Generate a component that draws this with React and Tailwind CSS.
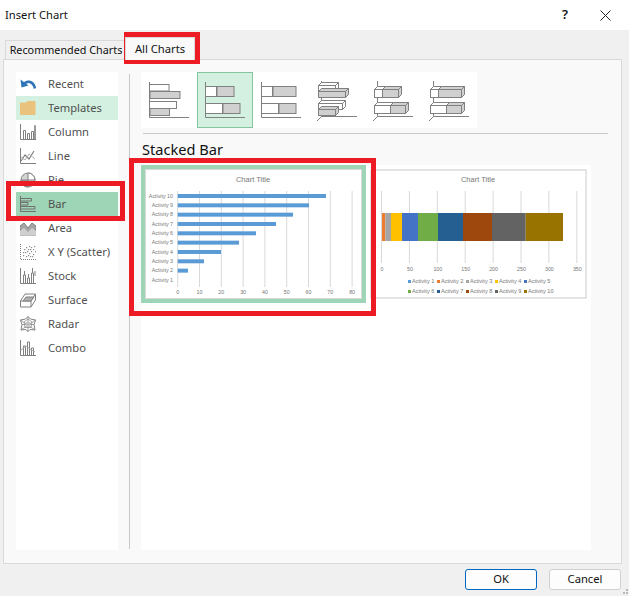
const G = '#808080';

// left list icons, drawn on a 16x16 box
const RecentIcon = () => (
    <svg width="16" height="16" viewBox="0 0 16 16">
        <path d="M3.5 9C6 4.500 13 4 15 12.500" fill="none" stroke="#2e75b6" strokeWidth="2.600" />
        <path d="M0.500 3.500L1.500 11.500L8.500 9.500Z" fill="#2e75b6" />
    </svg>
);
const FolderIcon = () => (
    <svg width="16" height="16" viewBox="0 0 16 16">
        <path d="M0 2.500H6L7.500 1H15.500V15H0Z" fill="#e9c27d" />
    </svg>
);
const ColumnIcon = () => (
    <svg width="16" height="16" viewBox="0 0 16 16" fill="none" stroke={G}>
        <path d="M0.500 0V15.500H16M3.500 15V6.500H5.500V15M7.500 15V9.500H9.500V15M11.500 15V7.500H13.500V15" />
        <path d="M14.500 15V1.500H15.500V15" strokeWidth="0.800" />
    </svg>
);
const LineIcon = () => (
    <svg width="16" height="16" viewBox="0 0 16 16" fill="none" stroke={G}>
        <path d="M0.500 0V15.500H16" />
        <path d="M1 13L5 7L9 11L14 3" strokeWidth="1.200" />
        <path d="M1 9L5 12L9 6L15 11" stroke="#b0b0b0" />
    </svg>
);
const PieIcon = () => (
    <svg width="16" height="16" viewBox="0 0 16 16">
        <circle cx="8" cy="8" r="7" fill="#d4d4d4" stroke={G} />
        <path d="M8 8V1A7 7 0 0 1 15 8Z" fill="#fff" stroke={G} />
        <path d="M8 8V15A7 7 0 0 1 1 8Z" fill="#a0a0a0" stroke={G} />
    </svg>
);
const BarIcon = () => (
    <svg width="16" height="16" viewBox="0 0 16 16" fill="none" stroke="#707070">
        <path d="M0.500 0V15.500H16M1 2.500H11.500V5H1M1 6.500H8V9H1M1 10.500H15V13H1" />
    </svg>
);
const AreaIcon = () => (
    <svg width="16" height="16" viewBox="0 0 16 16">
        <path d="M0 6L4 3L8 8L12 3L16 6V15H0Z" fill="#a6a6a6" stroke={G} />
        <path d="M0 11L4 8L8 12L12 8L16 11V15H0Z" fill="#cfcfcf" />
    </svg>
);
const ScatterIcon = () => (
    <svg width="16" height="16" viewBox="0 0 16 16" fill="#8c8c8c">
        <path d="M0.500 0V15.500H16" fill="none" stroke={G} strokeDasharray="1 1" />
        {[[3, 11], [5, 8], [6, 12], [8, 5], [9, 9], [11, 3], [11, 7], [13, 5], [13, 10], [14, 2], [7, 7], [10, 12], [4, 5], [6, 3], [9, 2], [3, 8], [12, 12], [8, 11], [15, 7], [10, 5]].map(([x, y]) => (
            <rect key={`${x}-${y}`} x={x} y={y} width="1.200" height="1.200" />
        ))}
    </svg>
);
const StockIcon = () => (
    <svg width="16" height="16" viewBox="0 0 16 16" fill="none" stroke={G}>
        <path d="M0.500 0V15.500H16M3.500 15V7H5.500V15M7.500 15V10H9.500V15M11.500 15V5H13.500V15M4.500 7V3M8.500 10V6M12.500 5V0M15 3V8" />
    </svg>
);
const SurfaceIcon = () => (
    <svg width="16" height="16" viewBox="0 0 16 16" fill="none" stroke={G}>
        <path d="M0.500 9L5 2H15.500V8L11 15H0.500Z" />
        <path d="M0.500 9H11L15.500 2M11 9V15" />
        <path d="M3 9L6 5H14L11 9Z" fill="#b0b0b0" />
    </svg>
);
const RadarIcon = () => (
    <svg width="16" height="16" viewBox="0 0 16 16" fill="none" stroke={G}>
        <path d="M8 0.500L10.500 3L15.500 4L14 8.500L15 14L10 13.500L8 15.500L5.500 13.500L1 14L2 8.500L0.500 4L5.500 3Z" />
        <path d="M8 3L12 6L11 11.500H5L4 6Z" stroke="#a8a8a8" />
        <path d="M8 0.500V15.500M0.500 4L15 14M15.500 4L1 14M2 8.500H14" strokeWidth="0.700" />
        <path d="M8 5L10.500 7L9.500 10H6.500L5.500 7Z" fill="#c0c0c0" stroke="none" />
    </svg>
);
const ComboIcon = () => (
    <svg width="16" height="16" viewBox="0 0 16 16" fill="none" stroke={G}>
        <path d="M0.500 0V15.500H16M3.500 15V6H5.500V15M7.500 15V2H9.500V15M11.500 15V8H13.500V15" />
        <path d="M1 10L6 6L10 9L15 12" stroke="#a8a8a8" />
    </svg>
);

const chartTypes = [
    { name: 'Recent', Icon: RecentIcon },
    { name: 'Templates', Icon: FolderIcon, bg: 'bg-[#d3f0e0]' },
    { name: 'Column', Icon: ColumnIcon },
    { name: 'Line', Icon: LineIcon },
    { name: 'Pie', Icon: PieIcon },
    { name: 'Bar', Icon: BarIcon, bg: 'bg-[#9fd5b7]' },
    { name: 'Area', Icon: AreaIcon },
    { name: 'X Y (Scatter)', Icon: ScatterIcon },
    { name: 'Stock', Icon: StockIcon },
    { name: 'Surface', Icon: SurfaceIcon },
    { name: 'Radar', Icon: RadarIcon },
    { name: 'Combo', Icon: ComboIcon },
];

const GRAY = '#d0d0d0';

// [white start/end, gray end] rows for the subtype thumbnails
const Flat = ({ rows }) => (
    <svg width="54" height="54" viewBox="0 0 54 54" fill="none" stroke={G}>
        <path d="M7.500 9V44.500H47" />
        {rows.map((r, i) => (
            <g key={i}>
                <rect x="7.500" y={r.y + 0.5} width={r.w - 7.5} height={r.h} fill="#fff" />
                <rect x={r.w + 0.5} y={r.y + 0.5} width={r.g - r.w} height={r.h} fill={GRAY} />
            </g>
        ))}
    </svg>
);

const Box = ({ x, y, w, h, fill }) => (
    <g fill={fill}>
        <path d={`M${x} ${y}l3 -3h${w}l-3 3Z`} />
        <path d={`M${x + w} ${y}l3 -3v${h}l-3 3Z`} />
        <rect x={x} y={y} width={w} height={h} />
    </g>
);

const Axis3D = () => <path d="M7 48L11.500 43.500H47M11.500 43.500V8" />;

const Thumb3D = ({ boxes }) => (
    <svg width="54" height="54" viewBox="0 0 54 54" fill="none" stroke={G}>
        <Axis3D />
        {boxes.map((b, i) => <Box key={i} {...b} />)}
    </svg>
);

const thumbs = [
    <Flat rows={[{ y: 11, h: 6.500, w: 27, g: 27 }, { y: 18, h: 7, w: 7.500, g: 37.500 }, { y: 28, h: 7, w: 34.500, g: 34.500 }, { y: 35, h: 7, w: 7.500, g: 27 }]} />,
    <Flat rows={[{ y: 13, h: 10, w: 18.500, g: 35.500 }, { y: 30, h: 10, w: 24.500, g: 41.500 }]} />,
    <Flat rows={[{ y: 13, h: 10, w: 18.500, g: 41.500 }, { y: 30, h: 10, w: 24.500, g: 41.500 }]} />,
    <Thumb3D boxes={[
        { x: 8.500, y: 12.500, w: 17, h: 6, fill: '#fff' },
        { x: 8.500, y: 18.500, w: 27, h: 6, fill: GRAY },
        { x: 8.500, y: 30.500, w: 24, h: 6, fill: '#fff' },
        { x: 8.500, y: 36.500, w: 17, h: 6, fill: GRAY },
    ]} />,
    <Thumb3D boxes={[
        { x: 8.500, y: 16.500, w: 8, h: 8, fill: '#fff' },
        { x: 16.500, y: 16.500, w: 16, h: 8, fill: GRAY },
        { x: 8.500, y: 32.500, w: 16, h: 8, fill: '#fff' },
        { x: 24.500, y: 32.500, w: 15, h: 8, fill: GRAY },
    ]} />,
    <Thumb3D boxes={[
        { x: 8.500, y: 16.500, w: 8, h: 8, fill: '#fff' },
        { x: 16.500, y: 16.500, w: 23, h: 8, fill: GRAY },
        { x: 8.500, y: 32.500, w: 16, h: 8, fill: '#fff' },
        { x: 24.500, y: 32.500, w: 15, h: 8, fill: GRAY },
    ]} />,
];

const barEnds = [148.3, 131.3, 115.3, 98.3, 78.3, 61.3, 43.3, 26.3, 10.3, 0];

const ClusteredPreview = () => (
    <svg width="225" height="138" viewBox="0 0 225 138" className="font-['Liberation_Sans',sans-serif]">
        <rect x="2" y="2" width="221" height="134" fill="#fff" stroke="#9fd5b7" strokeWidth="4" />
        <rect x="4.500" y="4.500" width="216" height="129" fill="none" stroke="#d9d9d9" />
        <text x="112" y="17" fontSize="7.500" fill="#777" textAnchor="middle">Chart Title</text>
        {[0, 1, 2, 3, 4, 5, 6, 7, 8].map((i) => (
            <g key={i}>
                <rect x={36.2 + i * 21.8} y="26" width="1" height="96" fill="#d9d9d9" />
                <text x={36.7 + i * 21.8} y="129" fontSize="5.300" fill="#777" textAnchor="middle">{i * 10}</text>
            </g>
        ))}
        {barEnds.map((w, i) => (
            <g key={i}>
                <text x="32" y={32.8 + i * 9.33} fontSize="5.300" fill="#777" textAnchor="end">{`Activity ${10 - i}`}</text>
                <rect x="36.700" y={29 + i * 9.33} width={w} height="4" fill="#5b9bd5" />
            </g>
        ))}
    </svg>
);

const segments = [
    [0, 3.3, '#ed7d31'], [3.3, 9, '#a5a5a5'], [9, 20, '#ffc000'], [20, 36, '#4472c4'], [36, 56, '#70ad47'],
    [56, 81, '#255e91'], [81, 110, '#9e480e'], [110, 143.7, '#636363'], [143.7, 181, '#997300'],
];
const legend = [
    ['Activity 1', '#5b9bd5'], ['Activity 2', '#ed7d31'], ['Activity 3', '#a5a5a5'], ['Activity 4', '#ffc000'], ['Activity 5', '#4472c4'],
    ['Activity 6', '#70ad47'], ['Activity 7', '#255e91'], ['Activity 8', '#9e480e'], ['Activity 9', '#636363'], ['Activity 10', '#997300'],
];

const StackedPreview = () => (
    <svg width="217" height="130" viewBox="0 0 217 130" className="font-['Liberation_Sans',sans-serif]">
        <rect x="1" y="1" width="215" height="128" fill="#fff" stroke="#dcdcdc" strokeWidth="1.500" />
        <text x="108" y="13" fontSize="7.500" fill="#777" textAnchor="middle">Chart Title</text>
        {[0, 1, 2, 3, 4, 5, 6, 7].map((i) => (
            <g key={i}>
                <rect x={11 + i * 27.9} y="22" width="1" height="72" fill="#d9d9d9" />
                <text x={12 + i * 27.9} y="102" fontSize="5.300" fill="#777" textAnchor="middle">{i * 50}</text>
            </g>
        ))}
        {segments.map(([a, b, c]) => (
            <rect key={c} x={12 + a} y="44" width={b - a} height="28" fill={c} />
        ))}
        {legend.map(([label, c], i) => {
            const x = 38 + (i % 5) * 29;
            const y = i < 5 ? 114 : 124;
            return (
                <g key={label}>
                    <rect x={x} y={y - 3} width="3" height="3" fill={c} />
                    <text x={x + 4} y={y} fontSize="5.600" fill="#777">{label}</text>
                </g>
            );
        })}
    </svg>
);

const App = () => {
    return (
        <div className="relative w-[629px] h-[596px] overflow-hidden bg-[#f0f0f0] font-['Noto_Sans',sans-serif] text-[11.2px]">
            {/* Title bar */}
            <div className="flex items-center h-[30px] bg-white pl-[5px] text-[#111]">
                <span>Insert Chart</span>
                <span className="ml-auto mr-[32px] font-semibold text-[13px]">?</span>
                <svg className="mr-[18px]" width="11" height="11" viewBox="0 0 11 11" stroke="#222" strokeWidth="1">
                    <path d="M0.500 0.500L10.500 10.500M10.500 0.500L0.500 10.500" />
                </svg>
            </div>

            {/* Tabs */}
            <div className="flex items-end h-[29px] pl-[5px]">
                <div className="flex items-center justify-center w-[120px] h-[20px] -mb-px pl-[2px] whitespace-nowrap text-[10.8px] bg-[#f0f0f0] border border-[#d9d9d9] text-[#111]">
                    Recommended Charts
                </div>
                <div className="relative z-10 flex items-center justify-center w-[70px] h-[23px] -mb-px whitespace-nowrap bg-[#f9f9f9] border border-b-0 border-[#d9d9d9] text-[#111]">
                    All Charts
                </div>
            </div>

            {/* Main panel */}
            <div className="flex ml-[3px] w-[619px] h-[505px] pl-[12px] pt-[12px] bg-[#f9f9f9] border border-[#d9d9d9]">
                <div className="w-[102px] h-[478px] bg-white">
                    {chartTypes.map(({ name, Icon, bg }) => (
                        <div key={name} className={`flex items-center h-6 pl-1 ${bg || ''}`}>
                            <div className="w-[28px]"><Icon /></div>
                            <span className="text-[#505050]">{name}</span>
                        </div>
                    ))}
                </div>
                <div className="ml-[11px] mt-[2px] w-px h-[475px] bg-[#c8c8c8]"></div>
                <div className="ml-[11px]">
                    <div className="flex w-[336px] h-14 bg-white">
                        {thumbs.map((thumb, i) => (
                            <div
                                key={i}
                                className={`flex items-center justify-center w-14 h-14 ${i === 1 ? 'bg-[#d3f0e0] border border-[#86c4a0]' : ''}`}
                            >
                                {thumb}
                            </div>
                        ))}
                    </div>
                    <div className="mt-[5px] ml-[2px] w-[465px] h-px bg-[#c8c8c8]"></div>
                    <div className="flex items-center h-[31px] ml-px pt-px text-[14.6px] text-[#111]">Stacked Bar</div>
                    <div className="flex items-start w-[450px] h-[385px] bg-white">
                        <ClusteredPreview />
                        <div className="ml-[4px] mt-[4px]"><StackedPreview /></div>
                    </div>
                </div>
            </div>

            {/* Buttons */}
            <div className="flex justify-end gap-3 mt-[5px] pr-[8px]">
                <button className="w-[72px] h-[21px] bg-[#fdfdfd] border border-[#0067c0] rounded-[3px] text-[#111]">OK</button>
                <button className="w-[72px] h-[21px] bg-[#fdfdfd] border border-[#d0d0d0] rounded-[3px] text-[#111]">Cancel</button>
            </div>
            <svg className="absolute right-0 bottom-0" width="8" height="8" viewBox="0 0 8 8" fill="#b8b8b8">
                <rect x="5" y="1" width="2" height="2" />
                <rect x="2" y="4" width="2" height="2" />
                <rect x="5" y="4" width="2" height="2" />
            </svg>

            {/* Red annotation boxes */}
            <div className="absolute left-[124px] top-[32px] w-[76px] h-[32px] border-[5px] border-[#ed1c24] pointer-events-none"></div>
            <div className="absolute left-[6px] top-[181px] w-[119px] h-[40px] border-[5px] border-[#ed1c24] pointer-events-none"></div>
            <div className="absolute left-[129px] top-[158px] w-[247px] h-[158px] border-[5px] border-[#ed1c24] pointer-events-none"></div>
        </div>
    );
};

export default App;
